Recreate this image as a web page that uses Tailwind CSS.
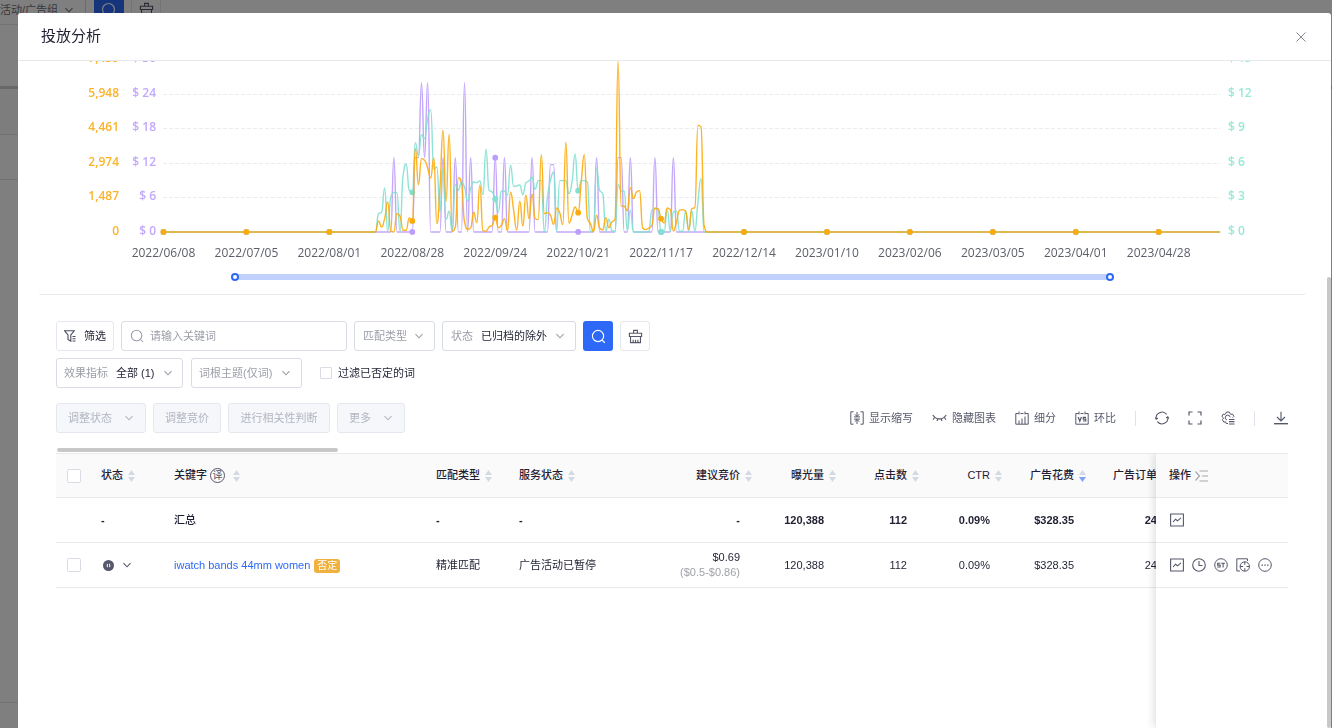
<!DOCTYPE html>
<html lang="zh-CN">
<head>
  <meta charset="UTF-8" />
  <meta name="viewport" content="width=device-width, initial-scale=1.0"/>
  <title>投放分析</title>
  <script src="https://cdn.jsdelivr.net/npm/@tailwindcss/browser@4"></script>
</head>
<body class="h-screen overflow-hidden bg-white font-['Liberation_Sans','Noto_Sans_CJK_SC',sans-serif] text-[11px] text-[#1f2133]">

  <!-- Shared icons -->
  <svg class="hidden">
    <symbol id="i-down" viewBox="0 0 10 10"><path d="M1.500 3.200 5 6.800 8.500 3.200" fill="none" stroke="currentColor" stroke-width="1.1"/></symbol>
    <symbol id="i-search" viewBox="0 0 16 16"><circle cx="7.500" cy="7.500" r="6" fill="none" stroke="currentColor" stroke-width="1.2"/><path d="m12 12 2.800 2.800" stroke="currentColor" stroke-width="1.2"/></symbol>
    <symbol id="i-broom" viewBox="0 0 16 16"><path d="M6 4.500v-3h4v3M1.500 8V4.500h13V8zM2.700 8v6.500h10.600V8M5.500 14.500v-3M8 14.500v-3M10.500 14.500v-3" fill="none" stroke="currentColor" stroke-width="1.2"/></symbol>
    <symbol id="i-sort" viewBox="0 0 7 12"><path d="M3.500 0 7 5H0z" fill="#d5d9e4"/><path class="fill-[var(--down,#d5d9e4)]" d="M3.500 12 0 7h7z"/></symbol>
    <symbol id="i-trend" viewBox="0 0 14 14"><path d="M.6 1h12.800v12H.6zM3 9l2.500-2.800 2 1.600L11 4.800" fill="none" stroke="currentColor" stroke-width="1.1"/></symbol>
  </svg>

  <!-- Page behind the dialog -->
  <main class="h-full flex flex-col">
    <div class="h-[25px] border-b border-gray-200 flex items-start">
      <div class="w-[86px] h-full pt-[2px] flex gap-[6px] border-r border-gray-300 text-gray-500 whitespace-nowrap">活动/广告组
        <svg class="size-[10px] mt-[3px]"><use href="#i-down"/></svg>
      </div>
      <div class="ml-2 w-[30px] h-[16px] bg-[#2d69f6] text-white flex justify-center pt-[2px]"><svg class="size-4"><use href="#i-search"/></svg></div>
      <div class="ml-[7px] w-[30px] h-full border-x border-gray-200 flex justify-center pt-[2px] text-[#55576a]"><svg class="size-[15px]"><use href="#i-broom"/></svg></div>
    </div>
    <div class="h-[61px]"></div>
    <div class="h-[3px] bg-[#d0d0d0]"></div>
    <div class="h-[46px] bg-neutral-50 border-b border-neutral-200"></div>
    <div class="h-[45px] border-b border-neutral-200"></div>
    <div class="flex-1"></div>
    <div class="h-[26px] border-t border-neutral-200"></div>
  </main>

  <!-- Dialog -->
  <div class="fixed inset-0 bg-black/50 pt-[13px] pl-[18px] pr-px">
    <div class="relative h-full bg-white rounded-t-[3px] overflow-hidden flex flex-col">
      <header class="h-12 shrink-0 flex items-center justify-between pl-[23px] pr-6 border-b border-[#e6e9ee]">
        <h1 class="text-[15px]">投放分析</h1>
        <button aria-label="关闭" class="text-[#85888f]"><svg class="size-3" viewBox="0 0 12 12"><path d="m1.500 1.500 9 9m0-9-9 9" stroke="currentColor" stroke-width="1"/></svg></button>
      </header>

      <!-- Chart -->
      <section class="ml-[21px] mr-[25px] pb-[12px] rounded-b-[3px] border-b border-[#e8e8e8]">
        <svg id="chart" class="block w-full font-['Open_Sans','Noto_Sans',sans-serif] text-[12px]" viewBox="39 61 1267 211"></svg>
        <div class="relative mx-[192px] h-[10px]">
          <div class="absolute inset-x-1 top-[2px] h-[6px] bg-[#c0d1fb]"></div>
          <input type="range" aria-label="开始日期" min="0" max="100" value="0" class="absolute inset-x-0 top-px w-full h-2 appearance-none bg-transparent pointer-events-none [&::-webkit-slider-thumb]:appearance-none [&::-webkit-slider-thumb]:pointer-events-auto [&::-webkit-slider-thumb]:box-border [&::-webkit-slider-thumb]:size-2 [&::-webkit-slider-thumb]:rounded-full [&::-webkit-slider-thumb]:border-2 [&::-webkit-slider-thumb]:border-solid [&::-webkit-slider-thumb]:border-[#2d69f6] [&::-webkit-slider-thumb]:bg-white"/>
          <input type="range" aria-label="结束日期" min="0" max="100" value="100" class="absolute inset-x-0 top-px w-full h-2 appearance-none bg-transparent pointer-events-none [&::-webkit-slider-thumb]:appearance-none [&::-webkit-slider-thumb]:pointer-events-auto [&::-webkit-slider-thumb]:box-border [&::-webkit-slider-thumb]:size-2 [&::-webkit-slider-thumb]:rounded-full [&::-webkit-slider-thumb]:border-2 [&::-webkit-slider-thumb]:border-solid [&::-webkit-slider-thumb]:border-[#2d69f6] [&::-webkit-slider-thumb]:bg-white"/>
        </div>
      </section>

      <section class="flex-1 min-h-0 flex flex-col pl-[38px] pr-[43px] pt-[26px]">
        <!-- Filters -->
        <div class="flex gap-[7px] h-[30px]">
          <button class="w-[58px] flex items-center justify-center gap-2 border border-[#e4e7f0] rounded-[3px]">
            <svg class="size-3" viewBox="0 0 12 12" fill="none" stroke="#4a4c5c" stroke-width="1.1"><path d="M.6.8h9.600L6.800 5v6.200L4 9.500V5zM8.500 6.500h3M8.500 8.800h3M8.500 11h3"/></svg>筛选
          </button>
          <label class="w-[226px] flex items-center gap-[6px] px-2 border border-[#d9dce5] rounded-[3px] text-[#9b9ea8]">
            <svg class="size-[14px] shrink-0"><use href="#i-search"/></svg>
            <input type="text" aria-label="关键词" placeholder="请输入关键词" class="w-full outline-none placeholder:text-[#9b9ea8]"/>
          </label>
          <label class="w-[81px] flex items-center gap-[6px] pl-2 border border-[#d9dce5] rounded-[3px] text-[#9b9ea8]">
            <select aria-label="匹配类型" class="appearance-none outline-none w-[45px]"><option>匹配类型</option></select>
            <svg class="size-[10px]"><use href="#i-down"/></svg>
          </label>
          <label class="w-[134px] flex items-center pl-2 border border-[#d9dce5] rounded-[3px] text-[#9b9ea8]">状态
            <select class="appearance-none outline-none ml-2 w-[68px] text-[#1f2133]"><option>已归档的除外</option></select>
            <svg class="size-[10px] ml-[6px]"><use href="#i-down"/></svg>
          </label>
          <button aria-label="搜索" class="w-[30px] flex items-center justify-center bg-[#2d69f6] text-white rounded-[3px]"><svg class="size-[15px]"><use href="#i-search"/></svg></button>
          <button aria-label="清空" class="w-[30px] flex items-center justify-center border border-[#e4e7f0] text-[#55576a] rounded-[3px]"><svg class="size-[15px]"><use href="#i-broom"/></svg></button>
        </div>
        <div class="mt-[7px] flex items-center gap-2 h-[30px]">
          <label class="w-[127px] h-full flex items-center pl-[7px] border border-[#d9dce5] rounded-[3px] text-[#9b9ea8]">效果指标
            <select class="appearance-none outline-none ml-2 w-[41px] text-[#1f2133]"><option>全部 (1)</option></select>
            <svg class="size-[10px] ml-[6px]"><use href="#i-down"/></svg>
          </label>
          <label class="w-[111px] h-full flex items-center gap-[6px] pl-[7px] border border-[#d9dce5] rounded-[3px] text-[#9b9ea8]">
            <select aria-label="词根主题" class="appearance-none outline-none w-[76px]"><option>词根主题(仅词)</option></select>
            <svg class="size-[10px]"><use href="#i-down"/></svg>
          </label>
          <label class="ml-[10px] flex items-center gap-[6px]"><input type="checkbox" class="appearance-none size-[12px] border border-[#d9dce5] rounded-[1px]"/>过滤已否定的词</label>
        </div>

        <!-- Batch actions and tools -->
        <div class="mt-[15px] flex items-center justify-between h-[30px]">
          <div class="flex gap-[7px] h-full text-[#b3b6c0]">
            <button disabled class="w-[90px] flex items-center justify-center gap-3 bg-[#f5f7fb] border border-[#e4e7ee] rounded-[3px]">调整状态<svg class="size-[10px]"><use href="#i-down"/></svg></button>
            <button disabled class="w-[68px] bg-[#f5f7fb] border border-[#e4e7ee] rounded-[3px]">调整竞价</button>
            <button disabled class="w-[102px] bg-[#f5f7fb] border border-[#e4e7ee] rounded-[3px]">进行相关性判断</button>
            <button disabled class="w-[68px] flex items-center justify-center gap-3 bg-[#f5f7fb] border border-[#e4e7ee] rounded-[3px]">更多<svg class="size-[10px]"><use href="#i-down"/></svg></button>
          </div>
          <div class="flex items-center gap-[19px] text-[#55576a]">
            <button class="flex items-center gap-[5px]"><svg class="size-[14px]" viewBox="0 0 14 14" fill="none" stroke="currentColor"><path d="M3.500.8H.8v12.400h2.700M10.500.8h2.700v12.400h-2.700M7 1v4.500M4.800 3.300 7 5.500 9.200 3.300M7 13V8.500M4.800 10.700 7 8.500l2.200 2.200M4 5.900h6M4 8.100h6"/></svg>显示缩写</button>
            <button class="flex items-center gap-[5px]"><svg class="w-[15px] h-[14px]" viewBox="0 0 15 14" fill="none" stroke="currentColor" stroke-width="1.1"><path d="M.8 4c3.200 5.200 10.200 5.200 13.400 0M2.800 6.300 1 8.800M5.800 7.800 5 10M9.200 7.800 10 10M12.200 6.300 14 8.800"/></svg>隐藏图表</button>
            <button class="flex items-center gap-[5px]"><svg class="size-[14px]" viewBox="0 0 14 14" fill="none" stroke="currentColor"><path d="M3.500 2.500H.8v10.700h12.400V2.500h-2.700M5.500 2.500h3M4 .5v3M10 .5v3M4 13V9.500M7 13V7.500M10 13V5.500"/></svg>细分</button>
            <button class="flex items-center gap-[5px]"><svg class="size-[14px]" viewBox="0 0 14 14" fill="none" stroke="currentColor"><path d="M3.500 2.500H.8v10.700h12.400V2.500h-2.700M5.500 2.500h3M4 .5v3M10 .5v3"/><path d="m3.200 6 1.600 4.300L6.400 6M11 6.300H8.300v1.800h2.400v1.900H8" stroke-width="1.200"/></svg>环比</button>
            <span class="h-[15px] w-px bg-[#dfe2e8]"></span>
            <button aria-label="刷新"><svg class="size-[14px]" viewBox="0 0 14 14" fill="none" stroke="currentColor" stroke-width="1.1"><path d="M1.200 8A5.900 5.900 0 0 1 11.600 3.300M12.800 6A5.900 5.900 0 0 1 2.400 10.700M.2 6.500l1 1.700 1.600-1.200M13.800 7.500l-1-1.700L11.200 7"/></svg></button>
            <button aria-label="全屏"><svg class="size-[14px]" viewBox="0 0 14 14" fill="none" stroke="currentColor" stroke-width="1.200"><path d="M4.500 1H1v3.500M9.500 1H13v3.500M4.500 13H1V9.500M9.500 13H13V9.500"/></svg></button>
            <button aria-label="设置"><svg class="size-[14px]" viewBox="0 0 14 14" fill="none" stroke="currentColor"><path d="M7 12.500H5.200l-.6-1.700-1.700.4L1.300 8.700l1.200-1.400-.2-.6L.9 5.500l1.200-2.300 1.900.2.700-.6L5.500 1h2.800l.7 1.700.8.600 1.800-.2L12.900 5.400l-1.200 1.200"/><path d="M6 9a2.500 2.500 0 1 1 3.200-2.800"/><path d="M8 8.500h5.500M8 10.700h5.500M8 13h5.500" stroke-width="1.200"/></svg></button>
            <span class="h-[15px] w-px bg-[#dfe2e8]"></span>
            <button aria-label="下载"><svg class="size-[14px]" viewBox="0 0 14 14" fill="none" stroke="currentColor" stroke-width="1.100"><path d="M7 .8v9M3 6l4 4 4-4"/><path d="M0 12.700h14" stroke-width="1.400"/></svg></button>
          </div>
        </div>

        <!-- Keyword table -->
        <div class="mt-[15px] shrink-0 h-1 mb-px ml-px w-[281px] rounded-full bg-[#c8c8c8]"></div>
        <div class="relative flex-1 min-h-0 overflow-hidden">
          <table class="table-fixed border-separate border-spacing-0 w-[1251px] leading-[15px] [&_th]:border-y [&_th]:border-[#e8eaec] [&_th]:bg-[#fafafa] [&_th]:h-[45px] [&_th]:px-[9px] [&_th]:text-left [&_th]:font-medium [&_td]:border-b [&_td]:border-[#e8eaec] [&_td]:h-[45px] [&_td]:px-[9px] whitespace-nowrap">
            <colgroup>
              <col class="w-[36px]"/><col class="w-[73px]"/><col class="w-[262px]"/><col class="w-[83px]"/><col class="w-[125px]"/><col class="w-[123px]"/><col class="w-[84px]"/><col class="w-[83px]"/><col class="w-[83px]"/><col class="w-[84px]"/><col class="w-[83px]"/><col class="w-[132px]"/>
            </colgroup>
            <thead>
              <tr>
                <th><input type="checkbox" aria-label="全选" class="block ml-[2px] appearance-none size-[14px] bg-white border border-[#d9dce5] rounded-[2px]"/></th>
                <th><div class="flex items-center gap-[5px]">状态<svg class="w-[7px] h-3"><use href="#i-sort"/></svg></div></th>
                <th><div class="flex items-center gap-[3px]">关键字<span class="flex items-center justify-center size-[15px] rounded-full border border-[#55576a] text-[10px] text-[#55576a] font-normal">译</span><svg class="ml-[5px] w-[7px] h-3"><use href="#i-sort"/></svg></div></th>
                <th><div class="flex items-center gap-[5px]">匹配类型<svg class="w-[7px] h-3"><use href="#i-sort"/></svg></div></th>
                <th><div class="flex items-center gap-[5px]">服务状态<svg class="w-[7px] h-3"><use href="#i-sort"/></svg></div></th>
                <th><div class="flex items-center justify-end gap-[5px] -mr-[3px]">建议竞价<svg class="w-[7px] h-3"><use href="#i-sort"/></svg></div></th>
                <th><div class="flex items-center justify-end gap-[5px] -mr-[3px]">曝光量<svg class="w-[7px] h-3"><use href="#i-sort"/></svg></div></th>
                <th><div class="flex items-center justify-end gap-[5px] -mr-[3px]">点击数<svg class="w-[7px] h-3"><use href="#i-sort"/></svg></div></th>
                <th><div class="flex items-center justify-end gap-[5px] -mr-[3px]">CTR<svg class="w-[7px] h-3"><use href="#i-sort"/></svg></div></th>
                <th><div class="flex items-center justify-end gap-[5px] -mr-[3px] [--down:#7fa2f8]">广告花费<svg class="w-[7px] h-3"><use href="#i-sort"/></svg></div></th>
                <th><div class="flex items-center justify-end gap-[5px] -mr-[3px]">广告订单<svg class="w-[7px] h-3"><use href="#i-sort"/></svg></div></th>
                <th class="sticky right-0 z-10"><div class="flex items-center gap-1 pl-1">操作<svg class="w-[13px] h-3" viewBox="0 0 13 12" fill="none" stroke="#a5a8b2" stroke-width="1.200"><path d="m.5 1.500 4 4.500-4 4.500M4.500 1H13M7 6h6M4.500 11H13"/></svg></div></th>
              </tr>
            </thead>
            <tbody>
              <tr class="font-bold">
                <td></td><td>-</td><td class="font-medium">汇总</td><td>-</td><td>-</td>
                <td class="text-right"><span class="pr-[9px]">-</span></td>
                <td class="text-right"><span class="pr-[9px]">120,388</span></td>
                <td class="text-right"><span class="pr-[9px]">112</span></td>
                <td class="text-right"><span class="pr-[9px]">0.09%</span></td>
                <td class="text-right"><span class="pr-[9px]">$328.35</span></td>
                <td class="text-right"><span class="pr-[9px]">24</span></td>
                <td class="sticky right-0 z-10 bg-white"><button aria-label="趋势" class="block ml-[5px] text-[#55576a]"><svg class="size-[14px]"><use href="#i-trend"/></svg></button></td>
              </tr>
              <tr>
                <td><input type="checkbox" aria-label="选择 iwatch bands 44mm women" class="block ml-[2px] appearance-none size-[14px] bg-white border border-[#d9dce5] rounded-[2px]"/></td>
                <td><button aria-label="已暂停" class="flex items-center gap-2 pl-[2px] text-[#55576a]"><svg class="size-[11px]" viewBox="0 0 11 11"><circle cx="5.500" cy="5.500" r="5.500" fill="currentColor"/><path d="M4.300 3.800v3.400M6.700 3.800v3.400" stroke="#fff"/></svg><svg class="size-[10px]"><use href="#i-down"/></svg></button></td>
                <td><a href="#" class="text-[#2d69f6]">iwatch bands 44mm women</a><span class="ml-1 px-[3px] py-px rounded-[3px] bg-[#f0b23c] text-white text-[10px] leading-[12px] inline-block">否定</span></td>
                <td>精准匹配</td><td>广告活动已暂停</td>
                <td class="text-right"><div class="pr-[9px]">$0.69<br/><span class="text-[#a0a2a8]">($0.5-$0.86)</span></div></td>
                <td class="text-right"><span class="pr-[9px]">120,388</span></td>
                <td class="text-right"><span class="pr-[9px]">112</span></td>
                <td class="text-right"><span class="pr-[9px]">0.09%</span></td>
                <td class="text-right"><span class="pr-[9px]">$328.35</span></td>
                <td class="text-right"><span class="pr-[9px]">24</span></td>
                <td class="sticky right-0 z-10 bg-white">
                  <div class="flex gap-2 ml-[5px] text-[#55576a]">
                    <button aria-label="趋势"><svg class="size-[14px]"><use href="#i-trend"/></svg></button>
                    <button aria-label="历史"><svg class="size-[14px]" viewBox="0 0 14 14" fill="none" stroke="currentColor" stroke-width="1.1"><circle cx="7" cy="7" r="6.300"/><path d="M7 3v4.500h3.500"/></svg></button>
                    <button aria-label="ST"><svg class="size-[14px]" viewBox="0 0 14 14" fill="none" stroke="currentColor"><circle cx="7" cy="7" r="6.300"/><path d="M6.300 5.200H3.600v1.900h2.500v1.900H3.300M7.200 5.200h3.800M9.100 5.200v4.200" stroke-width="1.100"/></svg></button>
                    <button aria-label="定位"><svg class="size-[14px]" viewBox="0 0 14 14" fill="none" stroke="currentColor"><path d="M4 13H.8V.8h10.700V3"/><circle cx="8.800" cy="8.500" r="4.700"/><path d="M8.800 3.800v3M8.800 10.200v3M4.100 8.500h3M10.500 8.500h3"/></svg></button>
                    <button aria-label="更多操作"><svg class="size-[14px]" viewBox="0 0 14 14"><circle cx="7" cy="7" r="6.300" fill="none" stroke="currentColor"/><path d="M3.500 6.400h1.400v1.300H3.500zM6.300 6.400h1.400v1.300H6.300zM9.100 6.400h1.400v1.300H9.100z" fill="currentColor"/></svg></button>
                  </div>
                </td>
              </tr>
            </tbody>
          </table>
          <!-- Edge shadow of the pinned column -->
          <div class="absolute inset-y-0 right-0 z-20 w-[132px] pointer-events-none shadow-[-2px_0_8px_rgba(0,0,0,0.13)]"></div>
        </div>
      </section>

      <div class="absolute right-0 top-[264px] bottom-0 w-1 rounded-full bg-[#c8c8c8]"></div>
    </div>
  </div>

  <script>
    // Plot area: one day is STEP wide, values are distances from the chart top (FLOOR = zero line)
    const LEFT = 163.5, STEP = 3.0715, DAYS = 344, FLOOR = 530;

    const spend = { 75: 307, 82: 307, 83: 307, 84: 82, 85: 307, 86: 82, 91: 307, 95: 307, 98: 82, 100: 307, 108: 307, 111: 307, 120: 307,
      126: 328, 127: 328, 141: 307, 148: 307, 149: 307, 152: 307, 160: 307, 166: 307 };

    const cpc = series(70, [475, 471, 398, 528, 425, 412, 412, 528, 360, 326, 405, 411, 262, 302, 238, 250, 190, 163, 342, 335,
      468, 340, 492, 468, 528, 388, 405, 380, 395, 437, 400, 380, 382, 377, 418, 282, 405, 410, 431, 470, 408, 407, 420, 330, 393,
      392, 389, 418, 382, 377, 366, 402, 376, 376, 530, 425, 375, 350, 528, 376, 376, 376, 415, 380, 296, 406, 376, 376, 380,
      528, 528, 337, 405, 415, 528, 492, 526, 528, 388, 407, 408, 526, 465, 530, 530, 530, 530, 530, 528, 465, 460, 463, 530,
      530, 463, 528, 470, 467, 528, 528, 467, 528, 467, 528, 440, 370]);

    const impressions = series(70, [497, 515, 490, 440, 527, 530, 475, 482, 525, 525, 488, 497, 280, 388, 310, 315, 338, 368, 307, 505,
      400, 225, 438, 237, 528, 515, 367, 382, 500, 522, 518, 471, 502, 390, 526, 528, 515, 510, 487, 517, 510, 490, 526, 411, 465,
      524, 438, 512, 420, 490, 417, 490, 493, 298, 475, 472, 480, 507, 458, 472, 508, 261, 503, 480, 455, 472, 380, 298, 490,
      505, 529, 480, 518, 524, 487, 517, 500, 492, 18, 452, 453, 466, 397, 430, 410, 406, 518, 523, 518, 510, 458, 460, 490,
      503, 458, 463, 527, 500, 465, 463, 468, 522, 460, 457, 210, 215, 510]);

    function series(start, values) {
      const out = {};
      values.forEach((v, i) => out[start + i] = v);
      return out;
    }

    const px = d => LEFT + d * STEP;
    const py = v => 55.3 + v / 3;

    // Monotone cubic line through every day
    function linePath(data) {
      const y = [];
      for (let d = 0; d <= DAYS; d++) y.push(py(data[d] ?? FLOOR));
      const slope = y.map((v, i) => {
        if (i === 0 || i === DAYS) return 0;
        const a = v - y[i - 1], b = y[i + 1] - v;
        return a * b <= 0 ? 0 : 2 * a * b / (a + b);
      });
      let path = `M${px(0)} ${y[0]}`;
      for (let i = 1; i <= DAYS; i++) {
        path += `C${px(i - 1) + STEP / 2} ${y[i - 1] + slope[i - 1] / 2} ${px(i) - STEP / 2} ${y[i] - slope[i] / 2} ${px(i)} ${y[i]}`;
      }
      return path;
    }

    const dates = ["2022/06/08", "2022/07/05", "2022/08/01", "2022/08/28", "2022/09/24", "2022/10/21", "2022/11/17",
      "2022/12/14", "2023/01/10", "2023/02/06", "2023/03/05", "2023/04/01", "2023/04/28"];
    const axis = [["0", "$ 0", "$ 0"], ["1,487", "$ 6", "$ 3"], ["2,974", "$ 12", "$ 6"], ["4,461", "$ 18", "$ 9"],
      ["5,948", "$ 24", "$ 12"], ["7,435", "$ 30", "$ 15"]];

    let svg = "";
    axis.forEach(([left, mid, right], i) => {
      const y = Math.round(231.5 - i * 34.5);
      if (i > 0) svg += `<line x1="163" x2="1220" y1="${y + 0.5}" y2="${y + 0.5}" stroke="#ececee" stroke-dasharray="4 2"/>`;
      svg += `<text x="119" y="${y + 3}" text-anchor="end" font-weight="600" fill="#fcb32c">${left}</text>
        <text x="156" y="${y + 3}" text-anchor="end" font-weight="600" fill="#c3a8fb">${mid}</text>
        <text x="1228" y="${y + 3}" font-weight="600" fill="#98e8d8">${right}</text>`;
    });
    [[spend, "#bb9dfa"], [cpc, "#82e0d0"], [impressions, "#fdab0c"]].forEach(([data, color]) => {
      svg += `<path d="${linePath(data)}" fill="none" stroke="${color}" stroke-width="1.400" stroke-opacity="0.9"/>`;
      dates.forEach((_, i) => svg += `<circle cx="${px(i * 27)}" cy="${py(data[i * 27] ?? FLOOR)}" r="2.900" fill="${color}"/>`);
    });
    dates.forEach((date, i) => svg += `<text x="${px(i * 27)}" y="257" text-anchor="middle" fill="#5c5e68">${date}</text>`);
    document.getElementById("chart").innerHTML = svg;
  </script>
</body>
</html>
